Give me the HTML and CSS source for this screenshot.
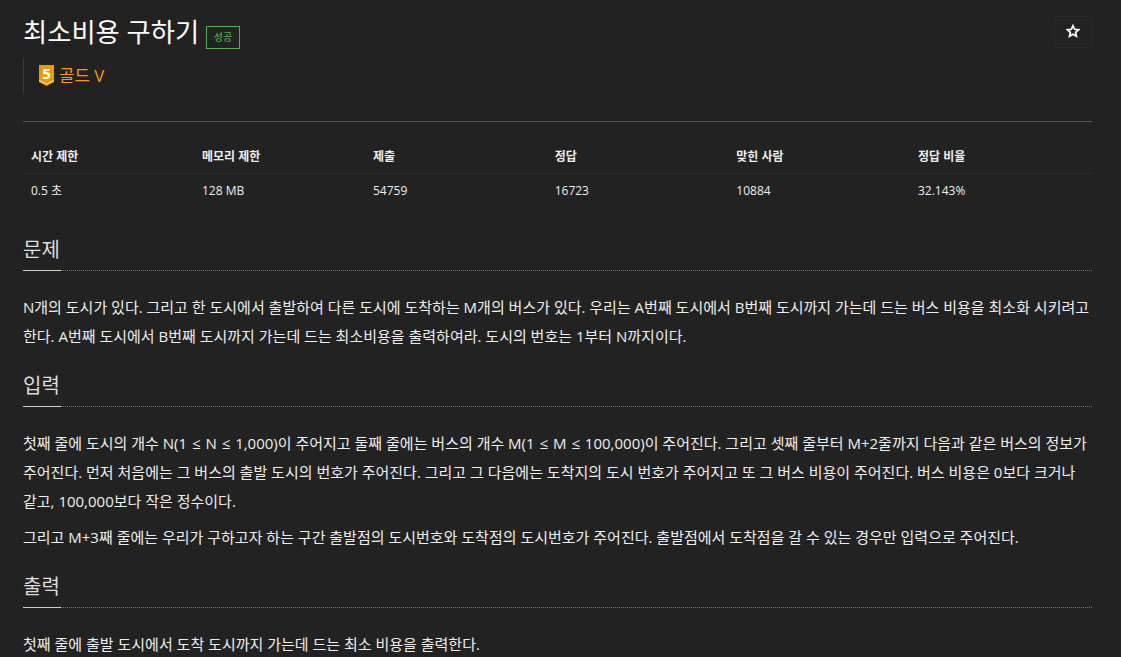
FILE: index.html
```html
<!DOCTYPE html>
<html lang="ko">
<head>
  <meta charset="UTF-8" />
  <title>최소비용 구하기</title>
  <link rel="stylesheet" href="styles.css">
</head>
<body>
  <div class="container">
    <div class="page-header">
      <div class="title-row">
        <h1>최소비용 구하기</h1>
        <span class="label-success">성공</span>
      </div>
      <button class="star-btn" aria-label="즐겨찾기">
        <svg width="14" height="14" viewBox="0 0 24 24"><path d="M12 3l2.800 6.100 6.700.8-5 4.500 1.400 6.600L12 17.600 6.100 21l1.400-6.600-5-4.500 6.700-.8z" fill="none" stroke="#fff" stroke-width="3" stroke-linejoin="miter"/></svg>
      </button>
    </div>
    <div class="tier">
      <svg class="tier-icon" width="15" height="21" viewBox="0 0 15 21">
        <path d="M0 0h15v17l-7.500 4L0 17z" fill="#ec9a00"/>
        <path d="M0 15.500l7.500 3.600 7.500-3.600" fill="none" stroke="#fff" stroke-opacity=".7" stroke-width="1"/>
        <text x="7.500" y="14" text-anchor="middle" class="tier-num">5</text>
      </svg>
      <span class="tier-name">골드 V</span>
    </div>

    <table class="info">
      <thead>
        <tr>
          <th class="col-1">시간 제한</th>
          <th class="col-1">메모리 제한</th>
          <th class="col-2">제출</th>
          <th class="col-2">정답</th>
          <th class="col-2">맞힌 사람</th>
          <th>정답 비율</th>
        </tr>
      </thead>
      <tbody>
        <tr>
          <td>0.5 초</td>
          <td>128 MB</td>
          <td>54759</td>
          <td>16723</td>
          <td>10884</td>
          <td>32.143%</td>
        </tr>
      </tbody>
    </table>

    <section class="problem">
      <div class="headline"><h2>문제</h2></div>
      <p>N개의 도시가 있다. 그리고 한 도시에서 출발하여 다른 도시에 도착하는 M개의 버스가 있다. 우리는 A번째 도시에서 B번째 도시까지 가는데 드는 버스 비용을 최소화 시키려고 한다. A번째 도시에서 B번째 도시까지 가는데 드는 최소비용을 출력하여라. 도시의 번호는 1부터 N까지이다.</p>
    </section>

    <section class="problem">
      <div class="headline"><h2>입력</h2></div>
      <p>첫째 줄에 도시의 개수 N(1 <span class="sym">≤</span> N <span class="sym">≤</span> 1,000)이 주어지고 둘째 줄에는 버스의 개수 M(1 <span class="sym">≤</span> M <span class="sym">≤</span> 100,000)이 주어진다. 그리고 셋째 줄부터 M+2줄까지 다음과 같은 버스의 정보가 주어진다. 먼저 처음에는 그 버스의 출발 도시의 번호가 주어진다. 그리고 그 다음에는 도착지의 도시 번호가 주어지고 또 그 버스 비용이 주어진다. 버스 비용은 0보다 크거나 같고, 100,000보다 작은 정수이다.</p>
      <p>그리고 M+3째 줄에는 우리가 구하고자 하는 구간 출발점의 도시번호와 도착점의 도시번호가 주어진다. 출발점에서 도착점을 갈 수 있는 경우만 입력으로 주어진다.</p>
    </section>

    <section class="problem">
      <div class="headline"><h2>출력</h2></div>
      <p>첫째 줄에 출발 도시에서 도착 도시까지 가는데 드는 최소 비용을 출력한다.</p>
    </section>
  </div>
</body>
</html>
```

FILE: styles.css
```css
html, body {
  height: 100%;
  overflow: hidden;
}

body {
  margin: 0;
  background-color: #222;
  color: #eee;
  font-family: "Open Sans", "Noto Sans CJK KR", sans-serif;
  font-size: 15px;
}

.container {
  padding: 0 29px 0 23px;
}

.page-header {
  display: flex;
  justify-content: space-between;
  align-items: flex-start;
  padding-top: 16px;
}

.title-row {
  display: flex;
  align-items: flex-end;
  gap: 7px;
}

h1 {
  margin: 0;
  font-size: 26.3px;
  font-weight: 400;
  line-height: 32px;
  color: #fff;
}

.label-success {
  border: 1px solid #4cae4c;
  color: #4cae4c;
  font-size: 10px;
  font-weight: 500;
  line-height: 21px;
  padding: 0 7px 0 6.500px;
  margin-bottom: -1px;
}

.star-btn {
  width: 38px;
  height: 32px;
  padding: 0 1px 2px 0;
  background: none;
  border: 1px solid #2a2a2a;
  display: flex;
  align-items: center;
  justify-content: center;
}

.tier {
  display: flex;
  align-items: center;
  gap: 5px;
  height: 35px;
  margin-top: 10px;
  padding-left: 15px;
  border-left: 1px solid #3a3a3a;
}

.tier-icon {
  overflow: visible;
}

.tier-num {
  font-size: 15px;
  font-weight: 700;
  fill: #fff;
}

.tier-name {
  font-size: 16.800px;
  color: #ff9900;
  line-height: 20px;
}

.info {
  width: 100%;
  margin-top: 28px;
  border-top: 1px solid #555;
  border-collapse: collapse;
  table-layout: fixed;
  font-size: 12px;
}

.info th {
  text-align: left;
  font-weight: 700;
  color: #eee;
  padding: 26px 8px 8px;
  line-height: 17px;
  border-bottom: 1px solid #2d2d2d;
}

.info td {
  padding: 8px;
  line-height: 17px;
}

.col-1 {
  width: 155px;
}

.col-2 {
  width: 165.67px;
}

.problem {
  margin-top: 28px;
}

.problem + .problem {
  margin-top: 20px;
}

.headline {
  border-bottom: 1px dotted #777;
}

h2 {
  display: inline-block;
  margin: 0 0 -1px;
  padding-bottom: 5px;
  font-size: 20px;
  font-weight: 400;
  line-height: 30px;
  color: #ddd;
  border-bottom: 1px solid #ccc;
  min-width: 38px;
}

.problem p {
  margin: 22px 0 0;
  line-height: 29px;
  color: #eee;
}

.problem p + p {
  margin-top: 7px;
}

.sym {
  margin: 0 1px;
}
```
